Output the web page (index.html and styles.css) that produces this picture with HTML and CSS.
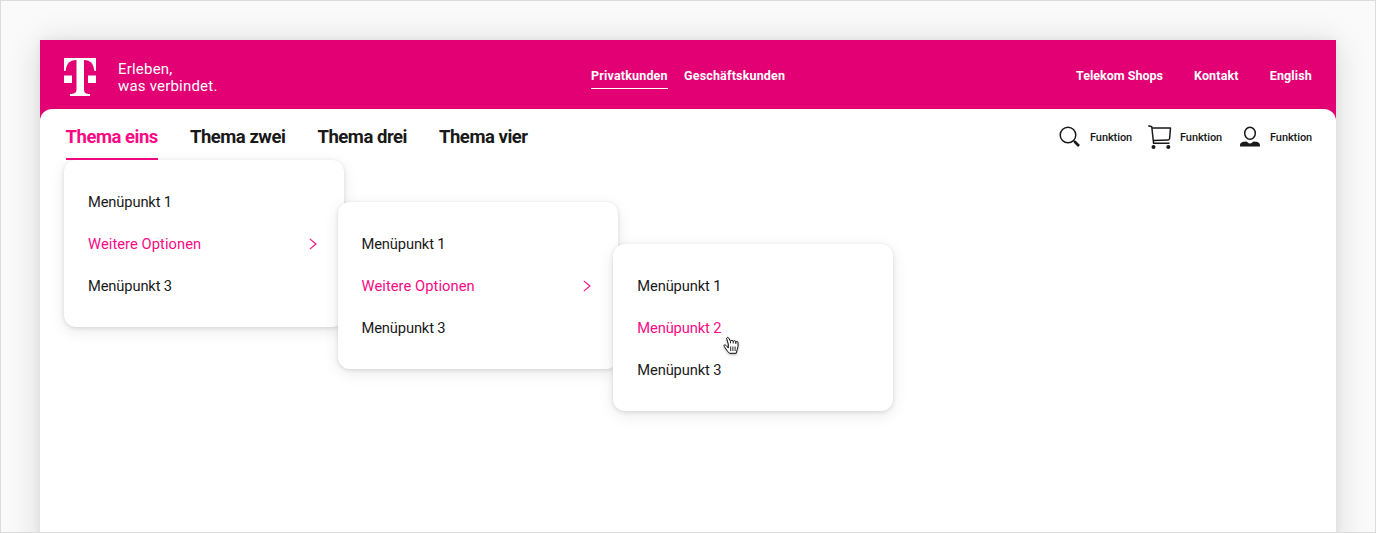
FILE: index.html
```html
<!DOCTYPE html>
<html lang="de">
<head>
<meta charset="utf-8">
<title>Telekom Navigation</title>
<link rel="stylesheet" href="styles.css">
</head>
<body>
<div class="stage">
  <div class="page">
    <header class="brand-bar">
      <svg class="logo" viewBox="0 0 32 38" width="32" height="38" fill="#fff">
        <path d="M0 0H32V13L30.300 12.700C29.500 6 27 2.100 20 2V31.500C20 35 22 36 26 36V38H6V36C10 36 12.500 35 12.500 31.500V2C5 2.100 2.600 6 1.700 12.700L0 13Z"/>
        <path d="M0 17.500H8V25H0ZM24 17.500H32V25H24Z"/>
      </svg>
      <p class="claim">Erleben,<br>was verbindet.</p>
      <nav class="segments">
        <a class="segment segment-active">Privatkunden</a>
        <a class="segment">Geschäftskunden</a>
      </nav>
      <nav class="meta">
        <a class="shops">Telekom Shops</a>
        <a class="kontakt">Kontakt</a>
        <a class="english">English</a>
      </nav>
    </header>
    <main class="sheet">
      <div class="nav-row">
        <nav class="topics">
          <a class="topic topic-active">Thema eins</a>
          <a class="topic">Thema zwei</a>
          <a class="topic">Thema drei</a>
          <a class="topic">Thema vier</a>
        </nav>
        <div class="functions">
          <a class="function">
            <svg width="24" height="24" viewBox="0 0 24 24" fill="none" stroke="#191919">
              <circle cx="10" cy="10" r="7.800" stroke-width="1.500"/>
              <path d="M15.500 15.500L17 17" stroke-width="1.500"/><path d="M16.500 16.500L21 21" stroke-width="2.600"/>
            </svg>
            <span>Funktion</span>
          </a>
          <a class="function">
            <svg width="24" height="24" viewBox="0 0 24 24" fill="none" stroke="#191919" stroke-width="1.500" stroke-linejoin="round">
              <path d="M.3 .8L3.800 1.800C4.400 8 5 13 5.600 18.300H21.500"/>
              <path d="M4.200 3H22.500L21.600 13.500C21.500 14.500 21 14.900 20 14.900L5.500 15.500"/>
              <circle cx="5.500" cy="22" r="2" fill="#191919" stroke="none"/>
              <circle cx="20.300" cy="22" r="2" fill="#191919" stroke="none"/>
            </svg>
            <span>Funktion</span>
          </a>
          <a class="function">
            <svg width="24" height="24" viewBox="0 0 24 24">
              <ellipse cx="12" cy="8.300" rx="5.300" ry="6" fill="none" stroke="#191919" stroke-width="1.500"/>
              <path d="M2 21.500V20.500C2 17.500 4.500 17 8 16.600C9.500 16.700 10 18.600 12 18.600S14.500 16.700 16 16.600C19.500 17 22 17.500 22 20.500V21.500Z" fill="#191919"/>
            </svg>
            <span>Funktion</span>
          </a>
        </div>
      </div>
      <ul class="menu menu-first">
        <li>Menüpunkt 1</li>
        <li class="current">Weitere Optionen <svg class="chevron" width="8" height="12" viewBox="0 0 8 12"><path d="M.8 .8L7 6L.8 11.200"/></svg></li>
        <li>Menüpunkt 3</li>
      </ul>
      <ul class="menu menu-second">
        <li>Menüpunkt 1</li>
        <li class="current">Weitere Optionen <svg class="chevron" width="8" height="12" viewBox="0 0 8 12"><path d="M.8 .8L7 6L.8 11.200"/></svg></li>
        <li>Menüpunkt 3</li>
      </ul>
      <ul class="menu menu-third">
        <li>Menüpunkt 1</li>
        <li class="current">Menüpunkt 2</li>
        <li>Menüpunkt 3</li>
      </ul>
      <svg class="pointer" width="18" height="20" viewBox="0 0 18 20">
        <path d="M5.600 12.200L3.200 9.600C1.500 8 .4 9.200 1.300 10.600L4.500 15.200L6.500 17.300H13.200L14.200 13.500L15 10.500V6.500C15 5.200 13 5.200 12.800 6.500V5.800C12.600 4.400 10.500 4.400 10.200 5.700V5.200C10 4 7.900 4 7.500 5.300L5.700 2C5 .8 3.300 1.500 3.700 2.800L5.300 8V11.800" fill="#fff" stroke="#111" stroke-width="1"/>
        <path d="M7.500 5.300V7.300M10.200 5.500V7.500M12.800 6.300V8M7.700 10.500V15M9.900 10.500V15M12.100 10.500V15" fill="none" stroke="#111" stroke-width=".9"/>
      </svg>
    </main>
  </div>
</div>
</body>
</html>
```
FILE: styles.css
```css
* { box-sizing: border-box; }
body { margin: 0; font-family: Roboto, sans-serif; color: #191919; }
.stage { height: 533px; border: 1px solid #dcdcdc; background: #fafafa; padding: 39px 39px 0; overflow: hidden; }
.page { height: 520px; background: #e20074; box-shadow: 0 4px 32px rgba(0,0,0,.15), 0 0 8px rgba(0,0,0,.05); }
.brand-bar { height: 69px; display: flex; color: #fff; padding: 18px 24px 0; }
.logo { flex: none; }
.claim { margin: 3px 0 0 22px; width: 473px; font-size: 15px; line-height: 17px; letter-spacing: .2px; }
.segments { display: flex; gap: 16px; padding-top: 9px; }
.segment { height: 22px; font-size: 12.500px; line-height: 17px; font-weight: 700; letter-spacing: .18px; white-space: nowrap; }
.segment-active { width: 77px; border-bottom: 1px solid #fff; }
.meta { margin-left: auto; display: flex; gap: 31px; padding-top: 9px; font-size: 12.500px; line-height: 17px; font-weight: 700; letter-spacing: .15px; }
.shops { letter-spacing: 0; }
.sheet { position: relative; height: 451px; background: #fff; border-radius: 12px 12px 0 0; }
.nav-row { height: 51px; display: flex; justify-content: space-between; padding: 0 24px 0 25.500px; }
.topics { display: flex; gap: 32px; }
.topic { height: 51px; font-size: 18.500px; font-weight: 700; line-height: 56px; letter-spacing: -.47px; white-space: nowrap; }
.topic-active { color: #f90984; border-bottom: 2px solid #f90984; }
.functions { display: flex; gap: 16px; padding-top: 16px; }
.function { display: flex; align-items: center; gap: 8px; height: 24px; font-size: 11px; font-weight: 500; letter-spacing: -.08px; }
.function span { width: 42px; white-space: nowrap; }
.function svg { overflow: visible; }
.menu { position: absolute; width: 280px; height: 167px; margin: 0; padding: 21px 24px; list-style: none; background: #fff; border-radius: 12px; box-shadow: 0 4px 16px rgba(0,0,0,.09), 0 1px 4px rgba(0,0,0,.12); }
.menu li { height: 42px; display: flex; align-items: center; justify-content: space-between; font-size: 14.700px; letter-spacing: -.13px; }
.menu .current { color: #f90984; }
.menu-first .current, .menu-second .current { letter-spacing: .07px; }
.menu-first { left: 24px; top: 51px; }
.menu-second { left: 297.500px; top: 93px; }
.menu-third { left: 573.300px; top: 135px; }
.chevron { margin-right: 3px; fill: none; stroke: #f90984; stroke-width: 1.100; }
.pointer { position: absolute; left: 682.500px; top: 227px; filter: drop-shadow(0 1px 1px rgba(0,0,0,.3)); }
```
